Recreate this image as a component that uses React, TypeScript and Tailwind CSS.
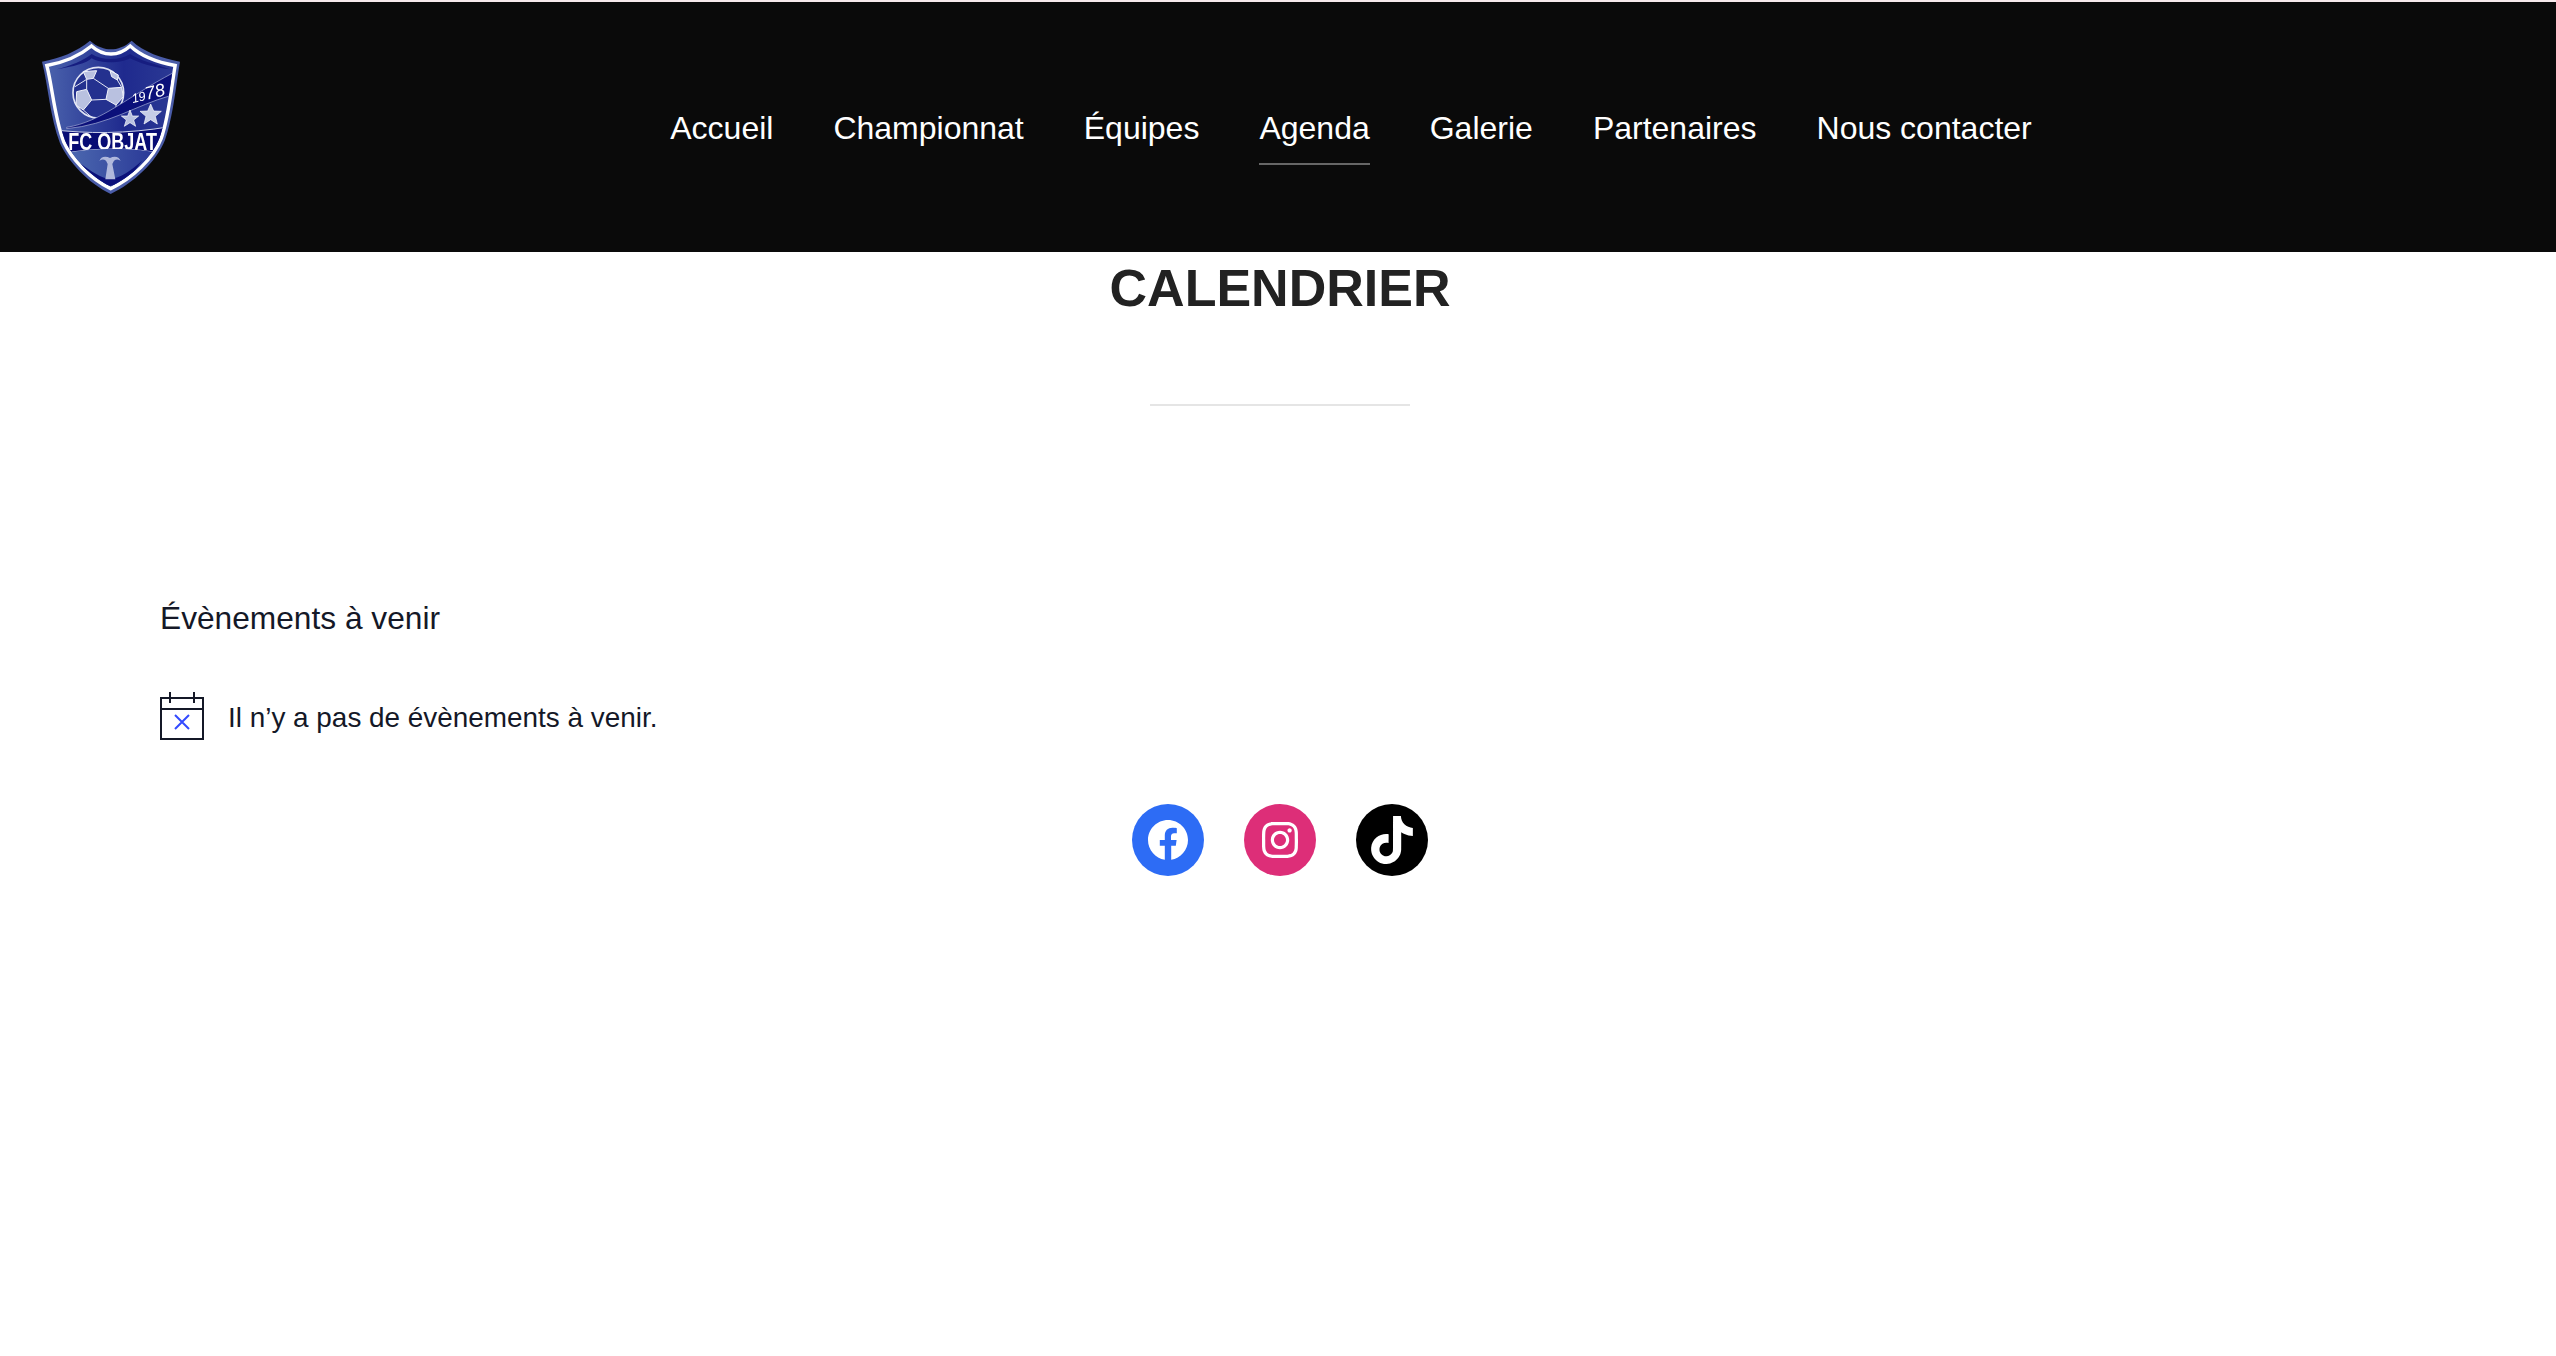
const navItems = ["Accueil", "Championnat", "Équipes", "Agenda", "Galerie", "Partenaires", "Nous contacter"];

const SHIELD =
  "M36 95 C90 85 140 65 180 32 C200 50 225 58 243 58 C262 58 285 50 305 32 C340 65 395 85 450 95 C440 150 430 260 405 330 C380 395 310 460 242 492 C175 460 115 395 90 340 C60 260 55 170 36 95 Z";

const Logo = () => (
  <svg viewBox="0 0 480 510" className="w-[160px] h-[170px] shrink-0 self-start mt-[28px] blur-[0.5px]">
    <defs>
      <linearGradient id="shieldFill" x1="0" y1="0" x2="1" y2="0">
        <stop offset="0" stopColor="#4a62ac" />
        <stop offset="0.6" stopColor="#1f2a8e" />
        <stop offset="1" stopColor="#2b3994" />
      </linearGradient>
      <linearGradient id="lowerFill" x1="0" y1="0" x2="1" y2="0">
        <stop offset="0" stopColor="#4f6db2" />
        <stop offset="1" stopColor="#263394" />
      </linearGradient>
      <clipPath id="inner">
        <path d={SHIELD} transform="translate(243 260) scale(0.9) translate(-243 -260)" />
      </clipPath>
    </defs>
    <path d={SHIELD} fill="#4a5ca8" />
    <path d={SHIELD} fill="url(#shieldFill)" stroke="#ffffff" strokeWidth="11" transform="translate(243 260) scale(0.93) translate(-243 -260)" />
    <g clipPath="url(#inner)">
      {/* top crest */}
      <path d="M80 118 C130 110 170 100 185 85 C210 100 270 102 300 85 C330 100 370 112 420 118 C370 100 330 92 300 72 C270 92 215 92 185 72 C160 92 120 108 80 118 Z" fill="#161d80" />
      {/* ball */}
      <circle cx="205" cy="188" r="76" fill="#24318f" stroke="#dfe3f3" strokeWidth="5" />
      <g fill="#b9c1e0" stroke="#f0f2fa" strokeWidth="3">
        <path d="M160 125 L200 122 L190 145 L170 148 Z" />
        <path d="M140 185 L170 178 L185 210 L160 240 L138 225 Z" />
        <path d="M235 175 L275 172 L280 200 L258 225 L228 208 Z" />
        <path d="M240 122 L265 135 L262 150 L245 140 Z" />
      </g>
      <g stroke="#e4e7f5" strokeWidth="3" fill="none">
        <path d="M170 148 L170 178 M190 145 L235 175 M185 210 L228 208 M160 240 L185 262 M258 225 L258 250 M262 150 L275 172 M135 170 L170 148" />
      </g>
      {/* year swoosh */}
      <path d="M110 292 C215 275 285 205 430 128 L418 198 C320 225 235 285 110 296 Z" fill="#0b107a" stroke="#aeb6dc" strokeWidth="2" />
      <text x="0" y="0" transform="translate(308 219) rotate(-13)" fontFamily="Liberation Sans, sans-serif" fontStyle="italic" fontSize="54" fill="#ffffff">
        <tspan fontSize="38">19</tspan>78
      </text>
      {/* stars */}
      <polygon points="300,240 307,258 326,258 311,270 317,289 300,278 283,289 289,270 274,258 293,258" fill="#b9c1e0" stroke="#ffffff" strokeWidth="2" />
      <polygon points="362,222 371,243 394,244 376,259 382,282 362,269 342,282 348,259 330,244 353,243" fill="#c6cde6" stroke="#ffffff" strokeWidth="2" />
      {/* name band */}
      <path d="M60 298 C170 312 290 312 420 290 L400 372 C320 352 190 352 90 372 Z" fill="#080c74" stroke="#c9cfe9" strokeWidth="3" />
      <text x="248" y="360" textAnchor="middle" fontFamily="Liberation Sans, sans-serif" fontWeight="700" fontSize="70" fill="#ffffff" textLength="266" lengthAdjust="spacingAndGlyphs">
        FC OBJAT
      </text>
      {/* lower part */}
      <path d="M90 372 C190 352 320 352 400 372 L380 440 L243 490 L110 440 Z" fill="url(#lowerFill)" />
      <path d="M148 398 C185 425 215 445 240 447 C270 445 305 420 336 392 C305 440 270 462 240 468 C210 462 175 440 148 398 Z" fill="#0b107a" />
      {/* fountain */}
      <path d="M226 448 L233 402 L228 392 C220 386 212 388 208 394 C212 378 228 378 240 384 C252 378 268 378 272 394 C268 388 260 386 252 392 L247 402 L256 448 Z" fill="#b0b8dc" />
    </g>
  </svg>
);

const FacebookIcon = () => (
  <svg viewBox="0 0 24 24" className="w-12 h-12 fill-white">
    <path d="M12 2C6.5 2 2 6.5 2 12c0 5 3.7 9.1 8.4 9.9v-7H7.9V12h2.5V9.8c0-2.5 1.5-3.9 3.8-3.9 1.1 0 2.2.2 2.2.2v2.5h-1.3c-1.2 0-1.6.8-1.6 1.6V12h2.8l-.4 2.9h-2.3v7C18.3 21.1 22 17 22 12c0-5.5-4.5-10-10-10z" />
  </svg>
);

const InstagramIcon = () => (
  <svg viewBox="0 0 24 24" className="w-12 h-12 fill-white">
    <path d="M12,4.622c2.403,0,2.688,0.009,3.637,0.052c0.877,0.04,1.354,0.187,1.671,0.31c0.42,0.163,0.72,0.358,1.035,0.673 c0.315,0.315,0.51,0.615,0.673,1.035c0.123,0.317,0.27,0.794,0.31,1.671c0.043,0.949,0.052,1.234,0.052,3.637 s-0.009,2.688-0.052,3.637c-0.04,0.877-0.187,1.354-0.31,1.671c-0.163,0.42-0.358,0.72-0.673,1.035 c-0.315,0.315-0.615,0.51-1.035,0.673c-0.317,0.123-0.794,0.27-1.671,0.31c-0.949,0.043-1.234,0.052-3.637,0.052 s-2.688-0.009-3.637-0.052c-0.877-0.04-1.354-0.187-1.671-0.31c-0.42-0.163-0.72-0.358-1.035-0.673 c-0.315-0.315-0.51-0.615-0.673-1.035c-0.123-0.317-0.27-0.794-0.31-1.671C4.631,14.688,4.622,14.403,4.622,12 s0.009-2.688,0.052-3.637c0.04-0.877,0.187-1.354,0.31-1.671c0.163-0.42,0.358-0.72,0.673-1.035 c0.315-0.315,0.615-0.51,1.035-0.673c0.317-0.123,0.794-0.27,1.671-0.31C9.312,4.631,9.597,4.622,12,4.622 M12,3 C9.556,3,9.249,3.01,8.289,3.054C7.331,3.098,6.677,3.25,6.105,3.472C5.513,3.702,5.011,4.01,4.511,4.511 c-0.5,0.5-0.808,1.002-1.038,1.594C3.25,6.677,3.098,7.331,3.054,8.289C3.01,9.249,3,9.556,3,12c0,2.444,0.01,2.751,0.054,3.711 c0.044,0.958,0.196,1.612,0.418,2.185c0.23,0.592,0.538,1.094,1.038,1.594c0.5,0.5,1.002,0.808,1.594,1.038 c0.572,0.222,1.227,0.375,2.185,0.418C9.249,20.99,9.556,21,12,21s2.751-0.01,3.711-0.054c0.958-0.044,1.612-0.196,2.185-0.418 c0.592-0.23,1.094-0.538,1.594-1.038c0.5-0.5,0.808-1.002,1.038-1.594c0.222-0.572,0.375-1.227,0.418-2.185 C20.99,14.751,21,14.444,21,12s-0.01-2.751-0.054-3.711c-0.044-0.958-0.196-1.612-0.418-2.185c-0.23-0.592-0.538-1.094-1.038-1.594 c-0.5-0.5-1.002-0.808-1.594-1.038c-0.572-0.222-1.227-0.375-2.185-0.418C14.751,3.01,14.444,3,12,3L12,3z M12,7.378 c-2.552,0-4.622,2.069-4.622,4.622S9.448,16.622,12,16.622s4.622-2.069,4.622-4.622S14.552,7.378,12,7.378z M12,15 c-1.657,0-3-1.343-3-3s1.343-3,3-3s3,1.343,3,3S13.657,15,12,15z M16.804,6.116c-0.596,0-1.08,0.484-1.08,1.08 s0.484,1.08,1.08,1.08c0.596,0,1.08-0.484,1.08-1.08S17.401,6.116,16.804,6.116z" />
  </svg>
);

const TiktokIcon = () => (
  <svg viewBox="0 0 32 32" className="w-12 h-12 fill-white">
    <path d="M16.708 0.027c1.745-0.027 3.48-0.011 5.213-0.027 0.105 2.041 0.839 4.12 2.333 5.563 1.491 1.479 3.6 2.156 5.652 2.385v5.369c-1.923-0.063-3.855-0.463-5.6-1.291-0.76-0.344-1.468-0.787-2.161-1.24-0.009 3.896 0.016 7.787-0.025 11.667-0.104 1.864-0.719 3.719-1.803 5.255-1.744 2.557-4.771 4.224-7.88 4.276-1.907 0.109-3.812-0.411-5.437-1.369-2.693-1.588-4.588-4.495-4.864-7.615-0.032-0.667-0.043-1.333-0.016-1.984 0.24-2.537 1.495-4.964 3.443-6.615 2.208-1.923 5.301-2.839 8.197-2.297 0.027 1.975-0.052 3.948-0.052 5.923-1.323-0.428-2.869-0.308-4.025 0.495-0.844 0.547-1.485 1.385-1.819 2.333-0.276 0.676-0.197 1.427-0.181 2.145 0.317 2.188 2.421 4.027 4.667 3.828 1.489-0.016 2.916-0.88 3.692-2.145 0.251-0.443 0.532-0.896 0.547-1.417 0.131-2.385 0.079-4.76 0.095-7.145 0.011-5.375-0.016-10.735 0.025-16.093z" />
  </svg>
);

const NoEventsIcon = () => (
  <svg viewBox="0 0 44 48" className="w-[44px] h-[48px] shrink-0" fill="none">
    <path d="M1 6h42v41H1zM1 17h42M10 0v11M34 0v11" stroke="#141827" strokeWidth="2" />
    <path d="M15 23l14 14M29 23L15 37" stroke="#334aff" strokeWidth="2" />
  </svg>
);

export default function App() {
  return (
    <div className="min-h-screen bg-white font-['Liberation_Sans',Arial,sans-serif]">
      {/* Header */}
      <header className="flex items-center h-[252px] pl-[30px] bg-[#0a0a0a] border-t-2 border-[#f6e9ec]">
        <Logo />
        <nav className="flex flex-1 justify-center gap-[60px] pr-[44px]">
          {navItems.map((item) => (
            <a
              key={item}
              className={`pt-[15px] pb-[11px] border-b-2 text-[32px] leading-[48px] text-white ${
                item === "Agenda" ? "border-[#666666]" : "border-transparent"
              }`}
            >
              {item}
            </a>
          ))}
        </nav>
      </header>

      <main className="pl-[4px]">
        <h1 className="mt-[6px] text-center text-[52px] leading-[60px] font-bold text-[#222222]">CALENDRIER</h1>
        <div className="mx-auto mt-[86px] w-[260px] h-[2px] bg-[#e5e5e5]" />

        {/* Events */}
        <section className="mt-[192px] pl-[156px] text-[#141827]">
          <h2 className="text-[31.7px] leading-[40px]">Évènements à venir</h2>
          <div className="mt-[54px] flex items-center gap-[24px]">
            <NoEventsIcon />
            <p className="pt-[3px] text-[27.9px] leading-[36px]">Il n’y a pas de évènements à venir.</p>
          </div>
        </section>

        {/* Social */}
        <div className="mt-[64px] flex justify-center gap-[40px]">
          <a className="flex items-center justify-center w-[72px] h-[72px] rounded-full bg-[#2d6cf5]">
            <FacebookIcon />
          </a>
          <a className="flex items-center justify-center w-[72px] h-[72px] rounded-full bg-[#dd2e78]">
            <InstagramIcon />
          </a>
          <a className="flex items-center justify-center w-[72px] h-[72px] rounded-full bg-black">
            <TiktokIcon />
          </a>
        </div>
      </main>
    </div>
  );
}
